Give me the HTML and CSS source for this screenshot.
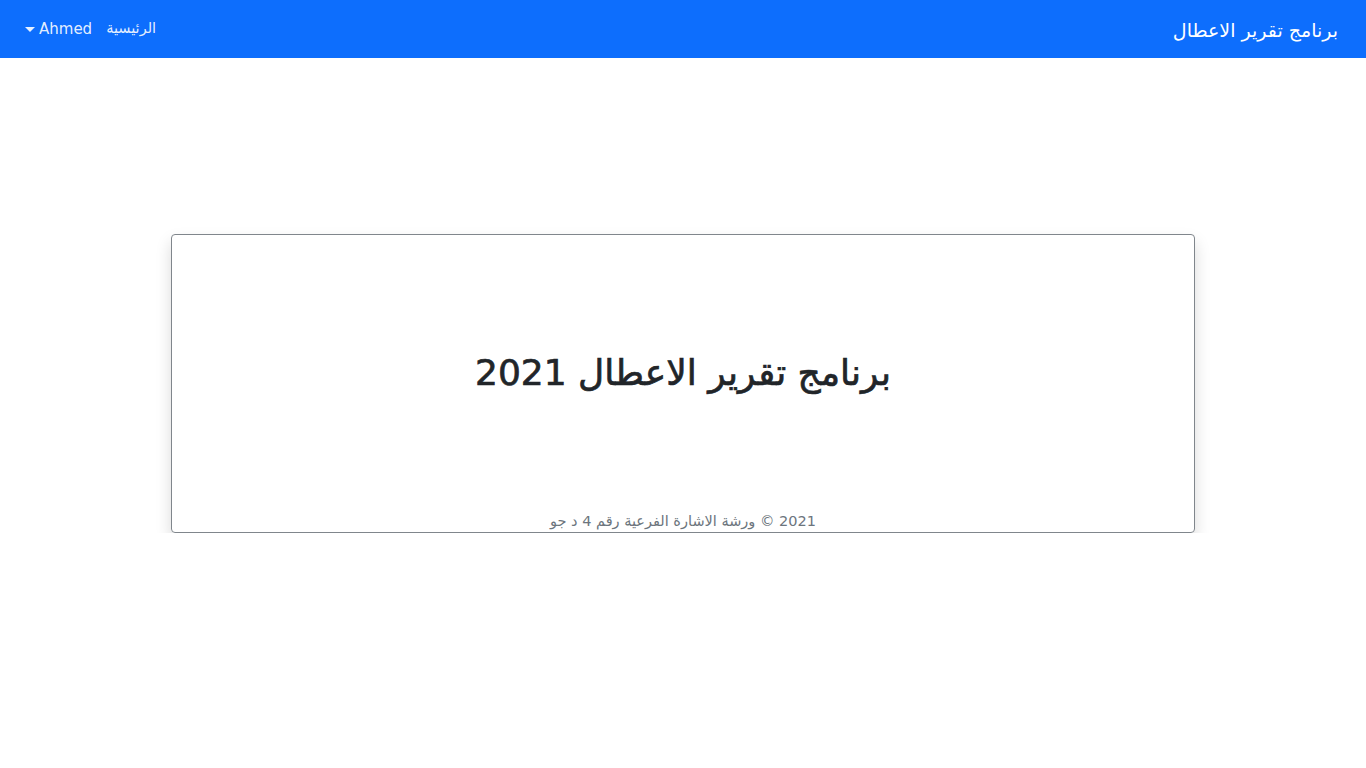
FILE: index.html
```html
<!DOCTYPE html>
<html lang="ar" dir="rtl">
<head>
<meta charset="utf-8">
<title>برنامج تقرير الاعطال</title>
<link rel="stylesheet" href="styles.css">
</head>
<body>
<nav class="navbar">
  <a class="brand" href="#">برنامج تقرير الاعطال</a>
  <ul class="nav">
    <li><a class="nav-link" href="#">الرئيسية</a></li>
    <li><a class="nav-link dropdown" href="#">Ahmed</a></li>
  </ul>
</nav>
<main class="main">
  <section class="card">
    <h1 class="title">برنامج تقرير الاعطال 2021</h1>
    <p class="footer">2021 © ورشة الاشارة الفرعية رقم 4 د جو</p>
  </section>
</main>
</body>
</html>
```
FILE: styles.css
```css
* { box-sizing: border-box; }
html, body { margin: 0; padding: 0; }
body {
  font-family: "Segoe UI", "DejaVu Sans", "Noto Sans", sans-serif;
  color: #212529;
  background: #fff;
  font-size: 16px;
}
.navbar {
  height: 58px;
  background: #0d6efd;
  display: flex;
  align-items: center;
  padding: 2px 28px 0 17px;
}
.brand {
  color: #fff;
  text-decoration: none;
  font-size: 19px;
}
.nav {
  list-style: none;
  margin: -2px auto 0 0;
  padding: 0;
  display: flex;
}
.nav-link {
  display: block;
  color: rgba(255,255,255,.9);
  text-decoration: none;
  padding: 8px;
  font-size: 15px;
}
.nav li:first-child .nav-link { font-size: 14.5px; padding-left: 6px; }
.dropdown::after {
  content: "";
  display: inline-block;
  vertical-align: middle;
  margin-right: 4px;
  border-top: 5px solid rgba(255,255,255,.9);
  border-left: 5px solid transparent;
  border-right: 5px solid transparent;
}
.main {
  padding: 176px 171px 0;
}
.card {
  height: 299px;
  border: 1px solid #80868c;
  border-radius: 4px;
  box-shadow: 0 8px 16px rgba(0,0,0,.15);
  display: flex;
  flex-direction: column;
  align-items: center;
}
.title {
  flex: 1;
  display: flex;
  align-items: center;
  margin: 0;
  font-size: 36px;
  font-weight: normal;
  -webkit-text-stroke: 0.7px #212529;
}
.footer {
  margin: 0 0 -1px;
  color: #6c757d;
  font-size: 14.5px;
  line-height: 24px;
}
```
